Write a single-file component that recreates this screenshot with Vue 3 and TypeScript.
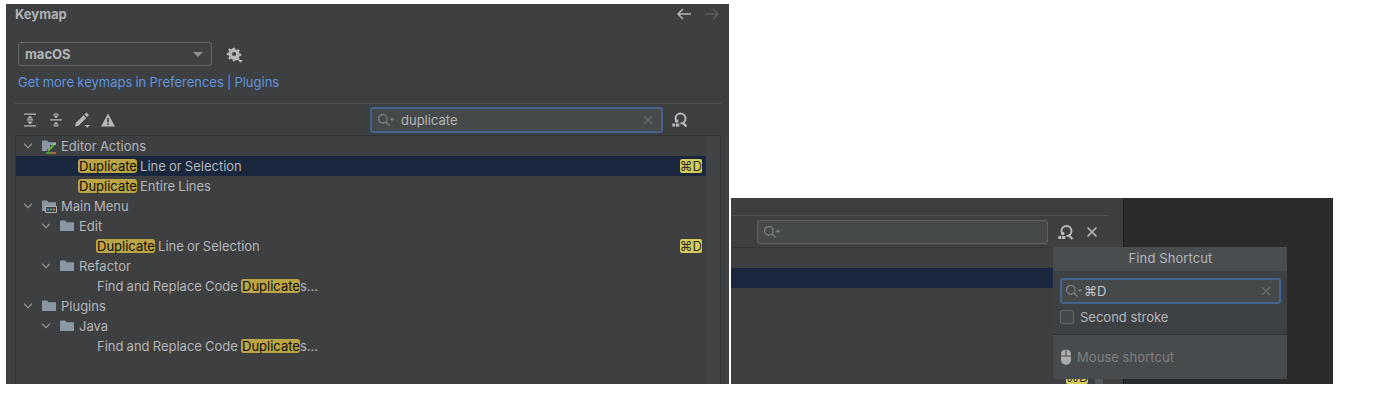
<script setup lang="ts">
interface Row { depth: number; kind: 'group' | 'leaf'; icon?: 'actions' | 'menu' | 'folder'; pre?: string; hit?: string; post?: string; label?: string; sel?: boolean; key?: boolean }
const rows: Row[] = [
  { depth: 0, kind: 'group', icon: 'actions', label: 'Editor Actions' },
  { depth: 1, kind: 'leaf', hit: 'Duplicate', post: ' Line or Selection', sel: true, key: true },
  { depth: 1, kind: 'leaf', hit: 'Duplicate', post: ' Entire Lines' },
  { depth: 0, kind: 'group', icon: 'menu', label: 'Main Menu' },
  { depth: 1, kind: 'group', icon: 'folder', label: 'Edit' },
  { depth: 2, kind: 'leaf', hit: 'Duplicate', post: ' Line or Selection', key: true },
  { depth: 1, kind: 'group', icon: 'folder', label: 'Refactor' },
  { depth: 2, kind: 'leaf', pre: 'Find and Replace Code ', hit: 'Duplicate', post: 's...' },
  { depth: 0, kind: 'group', icon: 'folder', label: 'Plugins' },
  { depth: 1, kind: 'group', icon: 'folder', label: 'Java' },
  { depth: 2, kind: 'leaf', pre: 'Find and Replace Code ', hit: 'Duplicate', post: 's...' },
]
const folderD = 'M1 3.500C1 3 1.400 2.600 2 2.600h4l1.500 1.600H15V13H1z'
</script>

<template>
  <div class="page">
    <section class="left">
      <header class="title">
        <span>Keymap</span>
        <span class="arrows">
          <svg width="16" height="16" viewBox="0 0 16 16" fill="none" stroke="#b4b6b8" stroke-width="1.500"><path d="M15 8H2M7 3L2 8l5 5"/></svg>
          <svg width="16" height="16" viewBox="0 0 16 16" fill="none" stroke="#5c5e60" stroke-width="1.500"><path d="M1 8h13M9 3l5 5-5 5"/></svg>
        </span>
      </header>
      <div class="scheme">
        <div class="combo"><span>macOS</span><i class="caret"></i></div>
        <svg class="gear" width="18" height="18" viewBox="0 0 18 18">
          <path fill="#b4b6b8" fill-rule="evenodd" d="M7.200 1.500h2.600l.4 2 1.600.7 1.700-1.100 1.800 1.800-1.100 1.700.7 1.600 2 .4v2.600l-2 .4-.7 1.600 1.100 1.700-1.800 1.800-1.700-1.100-1.600.7-.4 1H7.200l-.4-2-1.600-.7-1.700 1.100-1.800-1.800 1.100-1.700-.7-1.600-2-.4V7.600l2-.4.7-1.600L1.400 3.900l1.800-1.800 1.700 1.100 1.600-.7zM8.500 6.500a2.400 2.400 0 1 0 0 4.800 2.400 2.400 0 0 0 0-4.800z" transform="scale(.85) translate(1 .5)"/>
          <path fill="#b4b6b8" d="M12 14h5l-2.500 2.700z"/>
        </svg>
      </div>
      <div class="link">Get more keymaps in Preferences | Plugins</div>
      <div class="toolbar">
        <div class="tools">
          <svg width="16" height="16" viewBox="0 0 16 16" fill="#b4b6b8"><path d="M2 1.500h12v1.300H2zM2 13.200h12v1.300H2zM5 7.300h6v1.300H5zM8 3.600l2.800 2.800H5.200zM8 12.400l-2.800-2.800h5.600z"/></svg>
          <svg width="16" height="16" viewBox="0 0 16 16" fill="#b4b6b8"><path d="M2 7.300h12v1.300H2zM8 6.200L5.200 3.400h5.600zM8 9.800l2.800 2.800H5.200z"/><path d="M5.500 1.500h5v1.200h-5zM5.500 13.300h5v1.200h-5z"/></svg>
          <svg width="18" height="16" viewBox="0 0 18 16" fill="#b4b6b8"><path d="M1 14.500l.8-3.500 7.800-7.800 2.700 2.700-7.800 7.800zM10.400 2.400l1.300-1.300c.4-.4 1-.4 1.300 0l1.400 1.400c.4.400.4 1 0 1.300l-1.300 1.300zM10.500 13h5.500l-2.700 2.800z"/></svg>
          <svg class="warn" width="16" height="16" viewBox="0 0 16 16"><path fill="#b4b6b8" fill-rule="evenodd" d="M8 1.500L15 14.500H1zM7.200 6v4.600h1.600V6zM7.200 11.500v1.500h1.600v-1.500z"/></svg>
        </div>
        <div class="search focus main-search">
          <svg class="lens" width="18" height="14" viewBox="0 0 18 14" fill="none" stroke="#85888a" stroke-width="1.100"><circle cx="5.800" cy="5.800" r="4.300"/><path d="M9 9l3.500 3.500"/><path fill="#85888a" stroke="none" d="M12.500 5.500h5l-2.500 2.500z"/></svg>
          <span class="query">duplicate</span>
          <svg class="clear" width="10" height="10" viewBox="0 0 10 10" stroke="#6b6e70" stroke-width="1.100"><path d="M1 1l8 8M9 1l-8 8"/></svg>
        </div>
        <svg class="finder" width="18" height="18" viewBox="0 0 18 18" fill="none">
          <circle cx="10.500" cy="7.500" r="5" stroke="#b8babc" stroke-width="2"/><path d="M13 12l3.500 3.500" stroke="#b8babc" stroke-width="2.200"/>
          <path fill="#3e3f41" d="M2 9.500h8.500v8H2z"/><path fill="#b8babc" d="M5 8.500h3.300v3H5zM2.300 12.500h2.900v3H2.300zM6 12.500h3.300v3H6z"/>
        </svg>
      </div>
      <div class="tree">
        <div class="rows">
          <div v-for="(r, i) in rows" :key="i" class="row" :class="[{ sel: r.sel }, 'd' + r.depth, r.kind]">
            <template v-if="r.kind === 'group'">
              <svg class="chev" width="10" height="6" viewBox="0 0 10 6" fill="none" stroke="#9a9c9e" stroke-width="1.100"><path d="M1 .7l4 4 4-4"/></svg>
              <svg class="ico" width="16" height="16" viewBox="0 0 16 16">
                <path fill="#8a98a6" :d="folderD"/>
                <template v-if="r.icon === 'actions'">
                  <path fill="#3e3f41" d="M6 6h10v10H6z"/><path fill="#8a98a6" d="M5 6h4v5H5zM9 6h6v1H9z"/>
                  <path d="M7 13l5.500-6" stroke="#62b543" stroke-width="2"/><path d="M5 15h6" stroke="#62b543" stroke-width="1.500"/><path d="M11 15h4" stroke="#d9763c" stroke-width="1.500"/><path d="M12.500 7l2-2" stroke="#b4b6b8" stroke-width="1.500"/>
                </template>
                <template v-if="r.icon === 'menu'">
                  <path fill="#3e3f41" stroke="#afb1b3" stroke-width="1" d="M4.500 8.500h11v6h-11z"/><path fill="#4c8fd6" d="M6 10.500h2v2H6z"/><path fill="#62b543" d="M9 10.500h2v2H9z"/><path fill="#d9763c" d="M12 10.500h2v2h-2z"/>
                </template>
              </svg>
              <span class="text">{{ r.label }}</span>
            </template>
            <template v-else>
              <span class="text"><span v-if="r.pre" class="pre">{{ r.pre }}</span><mark class="hit">{{ r.hit }}</mark><span class="pre">{{ r.post }}</span></span>
              <span v-if="r.key" class="kbd">⌘D</span>
            </template>
          </div>
        </div>
        <div class="scroll"></div>
      </div>
    </section>

    <section class="right">
      <div class="pane">
        <div class="pane-top"></div>
        <div class="pane-bar">
          <div class="search idle">
            <svg class="lens" width="18" height="14" viewBox="0 0 18 14" fill="none" stroke="#85888a" stroke-width="1.100"><circle cx="5.800" cy="5.800" r="4.300"/><path d="M9 9l3.500 3.500"/><path fill="#85888a" stroke="none" d="M12.500 5.500h5l-2.500 2.500z"/></svg>
          </div>
          <svg class="finder2" width="18" height="18" viewBox="0 0 18 18" fill="none">
            <circle cx="10.500" cy="8" r="5" stroke="#b8babc" stroke-width="2"/><path d="M13 12.500l3.500 3.500" stroke="#b8babc" stroke-width="2.200"/>
            <path fill="#3e3f41" d="M2 10h8.500v8H2z"/><path fill="#b8babc" d="M5 9h3.300v3H5zM2.300 13h2.900v3H2.300zM6 13h3.300v3H6z"/>
          </svg>
          <svg class="close" width="12" height="12" viewBox="0 0 12 12" stroke="#b4b6b8" stroke-width="1.700"><path d="M1.500 1.500l9 9M10.500 1.500l-9 9"/></svg>
        </div>
        <div class="pane-body"><div class="pane-sel"></div></div>
      </div>
      <div class="dark"></div>

      <div class="popup">
        <div class="pop-head">Find Shortcut</div>
        <div class="pop-main">
          <div class="search focus pop-search">
            <svg class="lens" width="18" height="14" viewBox="0 0 18 14" fill="none" stroke="#85888a" stroke-width="1.100"><circle cx="5.800" cy="5.800" r="4.300"/><path d="M9 9l3.500 3.500"/><path fill="#85888a" stroke="none" d="M12.500 5.500h5l-2.500 2.500z"/></svg>
            <span class="query pop-q">⌘D</span>
            <svg class="clear" width="10" height="10" viewBox="0 0 10 10" stroke="#6b6e70" stroke-width="1.100"><path d="M1 1l8 8M9 1l-8 8"/></svg>
          </div>
          <label class="check"><i class="box"></i><span>Second stroke</span></label>
        </div>
        <div class="pop-mouse">
          <svg width="12" height="16" viewBox="0 0 12 16"><path fill="#a9abad" d="M1 6.500V5a5 4.500 0 0 1 4.500-4.400v5.900zM6.500.6A5 4.500 0 0 1 11 5v1.500H6.500zM1 7.500h10V11a5 4.800 0 0 1-10 0z"/></svg>
          <span>Mouse shortcut</span>
        </div>
      </div>
      <div class="under"><span class="kbd clip">⌘D</span><i class="under-thumb"></i></div>
    </section>
  </div>
</template>

<style>
html, body { margin: 0; background: #fff; }
</style>

<style scoped>
.page {
  display: flex;
  align-items: flex-start;
  gap: 2px;
  width: 1383px;
  height: 405px;
  padding: 4px 0 0 6px;
  box-sizing: border-box;
  font-family: Inter, "Liberation Sans", sans-serif;
  font-size: 13px;
  word-spacing: -0.5px;
  color: #b4b6b8;
  overflow: hidden;
}
.left {
  width: 723px;
  height: 380px;
  background: #3e3f41;
  display: flex;
  flex-direction: column;
}
.title {
  height: 20px;
  padding: 0 9px;
  display: flex;
  align-items: center;
  justify-content: space-between;
  font-size: 13px;
  font-weight: 700;
  color: #b0b2b4;
}
.arrows { display: flex; gap: 12px; }
.scheme { display: flex; align-items: center; margin: 18px 0 0 12px; gap: 14px; }
.combo {
  width: 194px;
  height: 24px;
  box-sizing: border-box;
  border: 1px solid #646668;
  border-radius: 3px;
  background: #3f4143;
  padding: 0 8px 0 6px;
  display: flex;
  align-items: center;
  justify-content: space-between;
  font-weight: 700;
  color: #b4b6b8;
}
.caret { width: 0; height: 0; border: 5px solid transparent; border-top: 5px solid #8e9092; border-bottom: 0; }
.gear { margin-top: 1px; }
.link { margin: 8px 0 0 12px; color: #5e93e0; line-height: 17px; }
.toolbar {
  margin: 12px 8px 0 9px;
  height: 30px;
  padding-top: 1px;
  border-top: 1px solid #515355;
  display: flex;
  align-items: center;
}
.tools { display: flex; align-items: center; gap: 10px; margin-left: 7px; width: 94px; flex: none; }
.tools svg { flex: none; }
.warn { margin-left: -2px; }
.search {
  display: flex;
  align-items: center;
  box-sizing: border-box;
  background: #45494a;
  border-radius: 3px;
}
.focus { border: 2px solid #44648f; }
.idle { border: 1px solid #626466; }
.main-search { width: 293px; height: 26px; margin-left: 254px; padding: 0 8px 0 5px; flex: none; }
.lens { flex: none; }
.query { margin-left: 6px; color: #b4b6b8; flex: 1; }
.clear { flex: none; }
.finder { margin-left: 7px; flex: none; }
.tree {
  margin: 0 8px 0 9px;
  flex: 1;
  border: 1px solid #323435;
  border-bottom: 0;
  border-top-color: #2f3132;
  display: flex;
  min-height: 0;
}
.rows { width: 690px; }
.scroll { flex: 1; background: #414345; }
.row { height: 20px; display: flex; align-items: center; position: relative; color: #b4b6b8; white-space: pre; }
.row.sel { background: #19283e; }
.row.group.d0 { padding-left: 7px; }
.row.group.d1 { padding-left: 25px; }
.row.leaf.d1 { padding-left: 62px; }
.row.leaf.d2 { padding-left: 80px; }
.row.leaf .pre:first-child { margin-left: 1px; }
.chev { flex: none; margin-right: 8px; }
.ico { flex: none; margin-right: 4px; }
.hit {
  background: #bca544;
  color: #0c0c0c;
  border-radius: 3px;
  padding: 0 0 0 1px;
  line-height: 14px;
  display: inline-block;
}
.kbd {
  position: absolute;
  right: 4px;
  top: 3px;
  background: #d6cb5a;
  color: #333;
  border-radius: 2px;
  font-size: 13px;
  line-height: 14px;
  height: 14px;
}
.right {
  width: 602px;
  height: 186px;
  margin-top: 194px;
  display: flex;
  position: relative;
}
.pane { width: 392px; background: #3e3f41; border-right: 1px solid #1c1c1d; display: flex; flex-direction: column; }
.pane-top { height: 17px; margin-right: 15px; border-bottom: 1px solid #515355; }
.pane-bar { height: 31px; display: flex; align-items: center; border-bottom: 1px solid #323435; padding-left: 26px; }
.pane-bar .search { width: 291px; height: 24px; padding-left: 5px; }
.finder2 { margin-left: 8px; }
.close { margin-left: 12px; }
.pane-body { flex: 1; padding-top: 20px; }
.pane-sel { height: 20px; background: #19283e; }
.dark { width: 209px; background: #2b2b2b; }
.popup {
  position: absolute;
  left: 322px;
  top: 49px;
  width: 234px;
  height: 132px;
  background: #3e4143;
  display: flex;
  flex-direction: column;
  word-spacing: 0;
  z-index: 2;
}
.pop-head { height: 24px; line-height: 23px; text-align: center; background: #4a4d50; color: #b4b6b8; letter-spacing: .1px; padding-left: 1px; }
.pop-main { flex: none; height: 64px; padding: 7px 6px 0 7px; box-sizing: border-box; border-bottom: 1px solid #323435; }
.pop-search { width: 221px; height: 26px; padding: 0 8px 0 3px; }
.pop-q { margin-left: 1px; color: #c4c6c8; }
.check { display: flex; align-items: center; gap: 6px; margin-top: 5px; color: #b4b6b8; }
.box { width: 12px; height: 12px; border: 1px solid #66686a; border-radius: 2px; background: #45484a; }
.pop-mouse { flex: 1; background: #484b4d; display: flex; align-items: center; gap: 5px; padding-left: 7px; color: #7e8082; letter-spacing: .05px; }
.under { position: absolute; left: 335px; top: 181px; width: 50px; height: 5px; overflow: hidden; }
.kbd.clip { right: auto; left: 0; top: -9px; }
.under-thumb { position: absolute; left: 29px; top: 0; width: 8px; height: 5px; background: #55585a; }
</style>
